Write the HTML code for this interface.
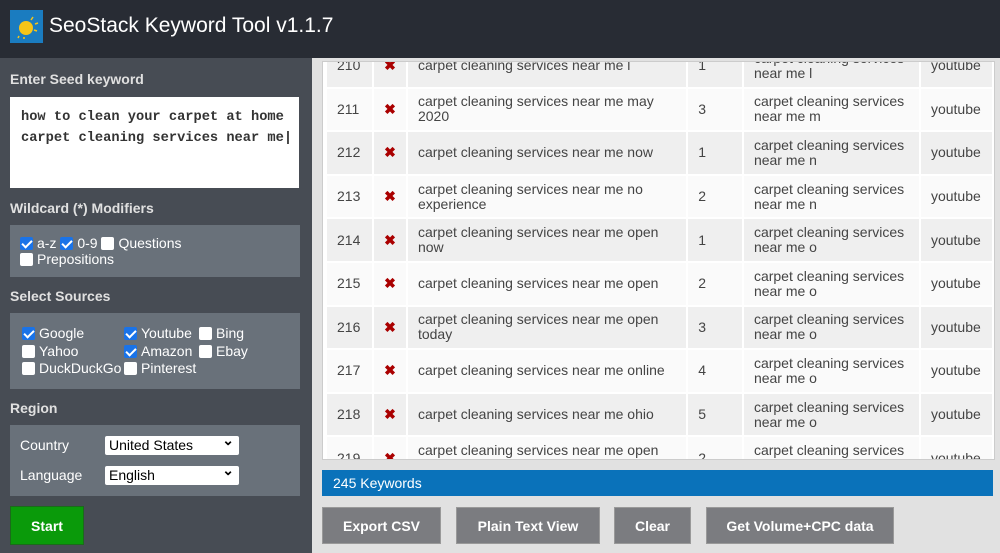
<!DOCTYPE html><html><head><style>
*{box-sizing:border-box;margin:0;padding:0}
body{width:1000px;height:553px;overflow:hidden;font-family:"Liberation Sans",Arial,sans-serif;background:#e1e1e1;position:relative}
.hdr{position:absolute;left:0;top:0;width:1000px;height:58px;background:#282c34}
.logo{position:absolute;left:10px;top:10px;width:33px;height:33px;background:#1a7cc0}
.title{position:absolute;left:49px;top:14px;color:#fff;font-size:21px}
.left{position:absolute;left:0;top:58px;width:312px;height:495px;background:#474c54}
.lbl{position:absolute;left:10px;color:#e0e0e0;font-weight:bold;font-size:14px}
.box{position:absolute;left:10px;width:290px;background:#69717a;color:#fff;font-size:14px}
.cb{display:inline-block;width:13px;height:13px;background:#fff;border-radius:2px;vertical-align:-2px;margin-right:4px}
.cb.on{background:#1a73e8;position:relative}
.cb.on:after{content:"";position:absolute;left:4px;top:1px;width:4px;height:8px;border:solid #fff;border-width:0 2px 2px 0;transform:rotate(45deg)}
.ta{position:absolute;left:10px;top:97px;width:289px;height:91px;background:#fff;font-family:"Liberation Mono",monospace;font-weight:bold;font-size:13.7px;line-height:21px;padding:10px 0 10px 11px;color:#333;white-space:pre}
.sel{position:absolute;left:105px;width:134px;height:19px;background:#fff;color:#000;font-size:14px;padding:1px 4px;border-radius:2px}
.sel:after{content:"⌄";position:absolute;right:5px;top:-4px;font-weight:bold}
.start{position:absolute;left:10px;top:506px;width:74px;height:39px;background:#0a9a0a;color:#fff;font-weight:bold;font-size:14px;text-align:center;line-height:39px;border:1px solid #1b6a1b}
.tbl{position:absolute;left:322px;top:61px;width:673px;height:399px;overflow:hidden;background:#fff;border:1px solid #ccc}
table{border-collapse:collapse;position:absolute;top:-19px;left:2px;font-size:14px;color:#444}
td{border:2px solid #fff;padding:0 10px;height:43.6px;line-height:15px;vertical-align:middle}
tr:nth-child(even) td{background:#fafafa}tr:nth-child(odd) td{background:#efefef}
.x{color:#a00;font-weight:bold;text-align:center}
.bar{position:absolute;left:322px;top:470px;width:671px;height:26px;background:#0a72ba;color:#fff;font-size:14px;line-height:26px;padding-left:11px}
.btn{position:absolute;top:507px;height:37px;background:#7b7c80;color:#fff;font-weight:bold;font-size:14px;text-align:center;line-height:37px;border:1px solid #999}
</style></head><body>
<div class="hdr"><div class="logo"><svg width="33" height="33"><circle cx="16" cy="18" r="7" fill="#f5c518"/><path d="M21 10l2-3M25 14l3-1M24 20l3 1M9 26l-1 2M14 27l0 2" stroke="#f5c518" stroke-width="1.5"/></svg></div><div class="title">SeoStack Keyword Tool v1.1.7</div></div>
<div class="left"></div>
<div class="lbl" style="top:71px">Enter Seed keyword</div>
<div class="ta">how to clean your carpet at home
carpet cleaning services near me|</div>
<div class="lbl" style="top:200px">Wildcard (*) Modifiers</div>
<div class="box" style="top:225px;height:52px;padding:10px 0 0 10px;line-height:16px"><span class="cb on"></span>a-z <span class="cb on"></span>0-9 <span class="cb"></span>Questions<br><span class="cb"></span>Prepositions</div>
<div class="lbl" style="top:288px">Select Sources</div>
<div class="box" style="top:313px;height:76px;line-height:17.5px">
<div style="position:absolute;left:12px;top:12px"><span class="cb on"></span>Google<br><span class="cb"></span>Yahoo<br><span class="cb"></span>DuckDuckGo</div>
<div style="position:absolute;left:114px;top:12px"><span class="cb on"></span>Youtube<br><span class="cb on"></span>Amazon<br><span class="cb"></span>Pinterest</div>
<div style="position:absolute;left:189px;top:12px"><span class="cb"></span>Bing<br><span class="cb"></span>Ebay</div></div>
<div class="lbl" style="top:400px">Region</div>
<div class="box" style="top:425px;height:71px"><span style="position:absolute;left:10px;top:12px">Country</span><span style="position:absolute;left:10px;top:42px">Language</span></div>
<div class="sel" style="top:436px">United States</div>
<div class="sel" style="top:466px">English</div>
<div class="start">Start</div>
<div class="tbl"><table>
<tr><td style="width:47px">210</td><td class="x" style="width:34px">✖</td><td style="width:282px">carpet cleaning services near me l</td><td style="width:56px">1</td><td style="width:178px">carpet cleaning services<br>near me l</td><td style="width:73px">youtube</td></tr>
<tr><td>211</td><td class="x">✖</td><td>carpet cleaning services near me may 2020</td><td>3</td><td>carpet cleaning services near me m</td><td>youtube</td></tr>
<tr><td>212</td><td class="x">✖</td><td>carpet cleaning services near me now</td><td>1</td><td>carpet cleaning services near me n</td><td>youtube</td></tr>
<tr><td>213</td><td class="x">✖</td><td>carpet cleaning services near me no experience</td><td>2</td><td>carpet cleaning services near me n</td><td>youtube</td></tr>
<tr><td>214</td><td class="x">✖</td><td>carpet cleaning services near me open now</td><td>1</td><td>carpet cleaning services near me o</td><td>youtube</td></tr>
<tr><td>215</td><td class="x">✖</td><td>carpet cleaning services near me open</td><td>2</td><td>carpet cleaning services near me o</td><td>youtube</td></tr>
<tr><td>216</td><td class="x">✖</td><td>carpet cleaning services near me open today</td><td>3</td><td>carpet cleaning services near me o</td><td>youtube</td></tr>
<tr><td>217</td><td class="x">✖</td><td>carpet cleaning services near me online</td><td>4</td><td>carpet cleaning services near me o</td><td>youtube</td></tr>
<tr><td>218</td><td class="x">✖</td><td>carpet cleaning services near me ohio</td><td>5</td><td>carpet cleaning services near me o</td><td>youtube</td></tr>
<tr><td>219</td><td class="x">✖</td><td>carpet cleaning services near me open saturday</td><td>2</td><td>carpet cleaning services near me o</td><td>youtube</td></tr>
</table></div>
<div class="bar">245 Keywords</div>
<div class="btn" style="left:322px;width:119px">Export CSV</div>
<div class="btn" style="left:456px;width:144px">Plain Text View</div>
<div class="btn" style="left:614px;width:77px">Clear</div>
<div class="btn" style="left:706px;width:188px">Get Volume+CPC data</div>
</body></html>
